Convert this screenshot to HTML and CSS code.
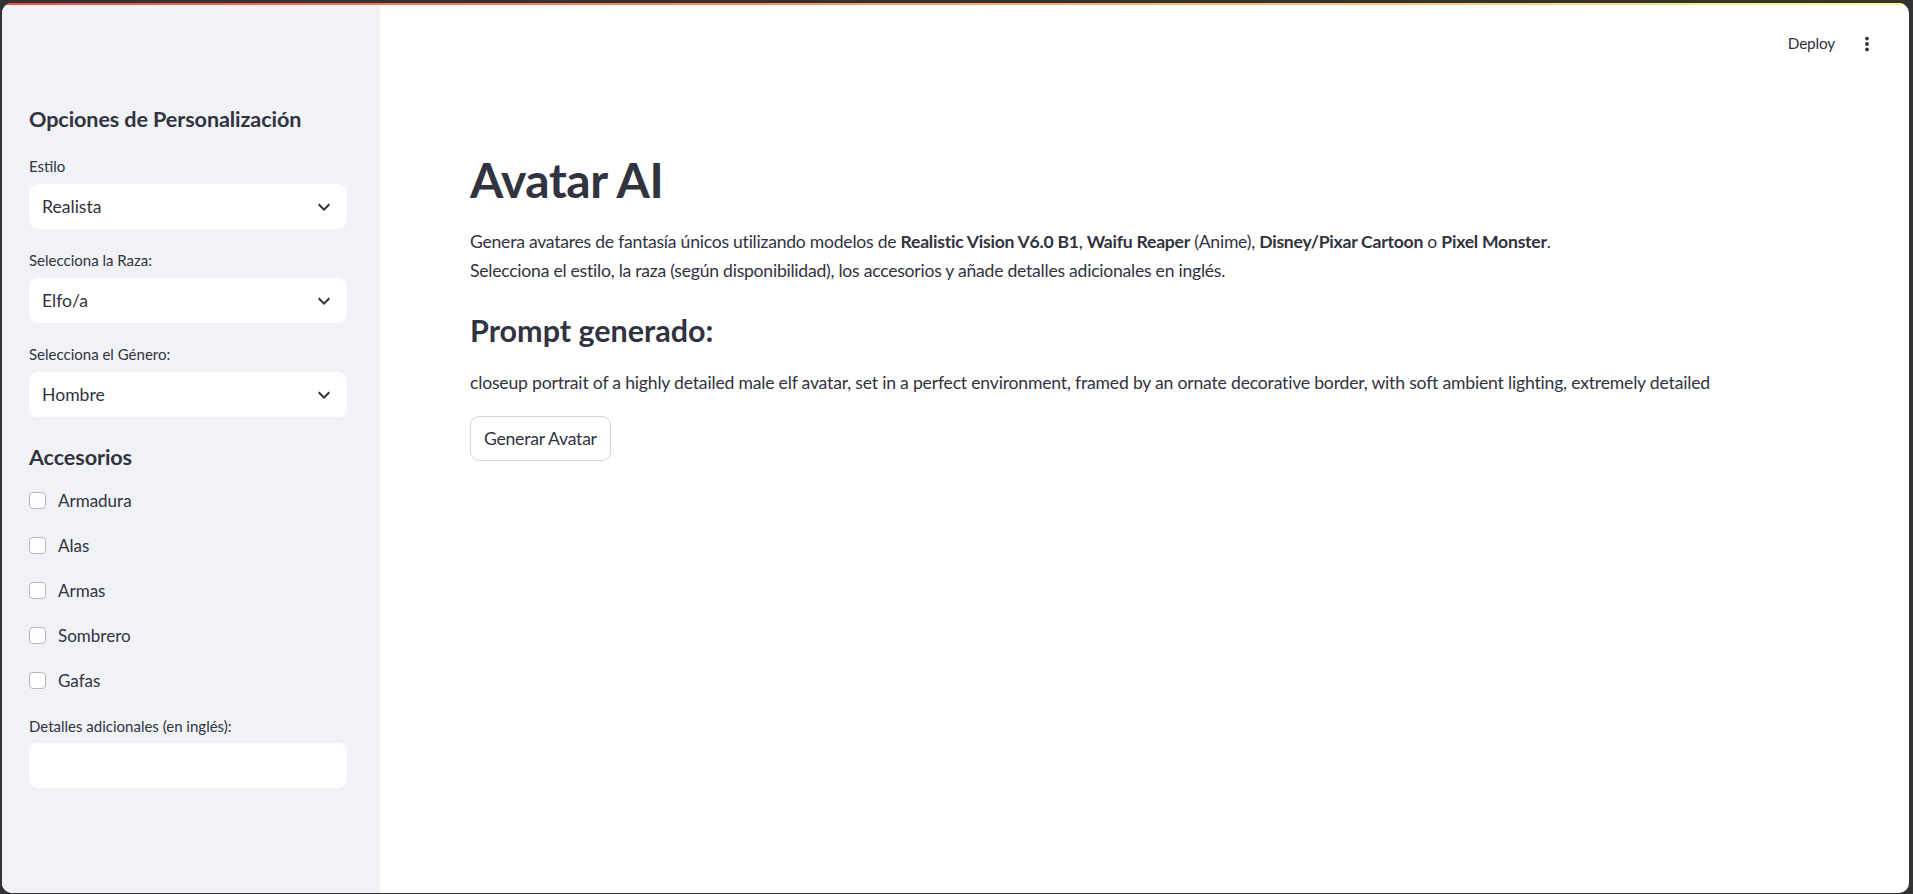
FILE: index.html
```html
<!DOCTYPE html>
<html lang="es">
<head>
<meta charset="utf-8">
<title>Avatar AI</title>
<link rel="stylesheet" href="styles.css">
</head>
<body>
<div class="window">
  <div class="topline"></div>
  <div class="app">
    <aside class="sidebar">
      <h2 class="side-heading">Opciones de Personalización</h2>
      <div class="field first">
        <div class="label">Estilo</div>
        <div class="select"><span>Realista</span>
          <svg class="chev" viewBox="0 0 24 24"><path d="M7.41 8.59L12 13.17l4.59-4.58L18 10l-6 6-6-6 1.41-1.41z"/></svg>
        </div>
      </div>
      <div class="field">
        <div class="label">Selecciona la Raza:</div>
        <div class="select"><span>Elfo/a</span>
          <svg class="chev" viewBox="0 0 24 24"><path d="M7.41 8.59L12 13.17l4.59-4.58L18 10l-6 6-6-6 1.41-1.41z"/></svg>
        </div>
      </div>
      <div class="field">
        <div class="label">Selecciona el Género:</div>
        <div class="select"><span>Hombre</span>
          <svg class="chev" viewBox="0 0 24 24"><path d="M7.41 8.59L12 13.17l4.59-4.58L18 10l-6 6-6-6 1.41-1.41z"/></svg>
        </div>
      </div>
      <h2 class="side-heading acc">Accesorios</h2>
      <div class="checks">
        <label class="check"><span class="box"></span>Armadura</label>
        <label class="check"><span class="box"></span>Alas</label>
        <label class="check"><span class="box"></span>Armas</label>
        <label class="check"><span class="box"></span>Sombrero</label>
        <label class="check"><span class="box"></span>Gafas</label>
      </div>
      <div class="field details">
        <div class="label">Detalles adicionales (en inglés):</div>
        <div class="select input"></div>
      </div>
    </aside>
    <main class="main">
      <header class="toolbar">
        <span class="deploy">Deploy</span>
        <svg class="kebab" viewBox="0 0 24 24"><circle cx="12" cy="5.5" r="2.3"/><circle cx="12" cy="12" r="2.3"/><circle cx="12" cy="18.5" r="2.3"/></svg>
      </header>
      <div class="content">
        <h1 class="title">Avatar AI</h1>
        <p class="intro">Genera avatares de fantasía únicos utilizando modelos de <b>Realistic Vision V6.0 B1</b>, <b>Waifu Reaper</b> (Anime), <b>Disney/Pixar Cartoon</b> o <b>Pixel Monster</b>.<br>Selecciona el estilo, la raza (según disponibilidad), los accesorios y añade detalles adicionales en inglés.</p>
        <h3 class="sub">Prompt generado:</h3>
        <p class="prompt">closeup portrait of a highly detailed male elf avatar, set in a perfect environment, framed by an ornate decorative border, with soft ambient lighting, extremely detailed</p>
        <button class="btn">Generar Avatar</button>
      </div>
    </main>
  </div>
</div>
</body>
</html>
```

FILE: styles.css
```css
* { box-sizing: border-box; }
html, body { margin: 0; padding: 0; }
body {
  background: #333333;
  font-family: Lato, "Liberation Sans", sans-serif;
  color: #31333f;
  height: 894px;
  overflow: hidden;
}
.window {
  margin: 3px 4px 0 2px;
  height: 890px;
  border-radius: 10px;
  overflow: hidden;
  background: #ffffff;
  display: flex;
  flex-direction: column;
}
.topline {
  height: 2px;
  flex: none;
  background: linear-gradient(90deg, #ff4b4b, #fffd80);
}
.app {
  flex: 1;
  display: flex;
}
.sidebar {
  width: 378px;
  flex: none;
  background: #f0f2f6;
  padding: 102px 33px 0 27px;
  display: flex;
  flex-direction: column;
}
.side-heading {
  margin: 0;
  font-size: 21.6px;
  line-height: 25px;
  font-weight: 700;
  letter-spacing: -0.1px;
}
.side-heading.acc { margin-top: 28px; }
.field { display: flex; flex-direction: column; gap: 8px; margin-top: 21px; }
.field.first { margin-top: 24px; }
.label { font-size: 15px; line-height: 20px; }
.select {
  height: 45px;
  background: #ffffff;
  border-radius: 9px;
  display: flex;
  align-items: center;
  justify-content: space-between;
  padding: 0 11px 0 13px;
  font-size: 17.6px;
}
.chev { width: 24px; height: 24px; fill: #31333f; }
.checks { display: flex; flex-direction: column; margin-top: 8px; }
.check {
  height: 45px;
  display: flex;
  align-items: center;
  gap: 12px;
  font-size: 17px;
}
.box {
  width: 17px;
  height: 17px;
  border: 1px solid #b5b7bd;
  border-radius: 4px;
  background: #ffffff;
}
.field.details { margin-top: 13px; gap: 7px; }
.main {
  flex: 1;
  display: flex;
  flex-direction: column;
}
.toolbar {
  height: 60px;
  display: flex;
  justify-content: flex-end;
  align-items: center;
  gap: 22px;
  padding: 15px 32px 0 0;
}
.deploy { font-size: 15.4px; line-height: 20px; letter-spacing: -0.2px; }
.kebab { width: 20px; height: 20px; fill: #31333f; margin-top: 2px; }
.content { padding: 86px 0 0 90px; }
.title {
  margin: 0;
  font-size: 48px;
  line-height: 57.6px;
  font-weight: 700;
  letter-spacing: -0.4px;
}
.intro, .prompt {
  font-size: 17.6px;
  line-height: 29px;
  margin: 0;
  letter-spacing: -0.25px;
}
.prompt { letter-spacing: -0.2px; }
.intro { margin-top: 18px; }
.intro b { font-weight: 700; }
.sub {
  margin: 28px 0 0;
  font-size: 30.5px;
  line-height: 35px;
  font-weight: 700;
}
.prompt { margin-top: 20px; }
.btn {
  margin-top: 19px;
  height: 45px;
  padding: 0 13px;
  background: #ffffff;
  border: 1px solid #d6d6d9;
  border-radius: 9px;
  font-family: inherit;
  font-size: 17.6px;
  letter-spacing: -0.25px;
  color: #31333f;
}
```
